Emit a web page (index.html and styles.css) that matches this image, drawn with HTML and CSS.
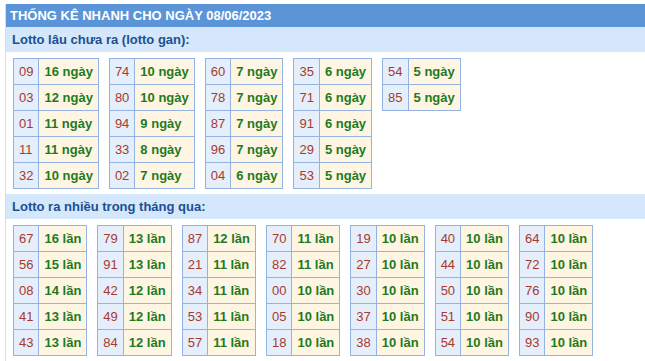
FILE: index.html
```html
<!DOCTYPE html>
<html lang="vi">
<head>
<meta charset="utf-8">
<title>Thống kê nhanh</title>
<link rel="stylesheet" href="styles.css">
</head>
<body>
<div class="box">
  <div class="title">THỐNG KÊ NHANH CHO NGÀY 08/06/2023</div>
  <div class="sub">Lotto lâu chưa ra (lotto gan):</div>
  <div class="group">
    <table class="t"><tr><td class="n">09</td><td class="v">16 ngày</td></tr><tr><td class="n">03</td><td class="v">12 ngày</td></tr><tr><td class="n">01</td><td class="v">11 ngày</td></tr><tr><td class="n">11</td><td class="v">11 ngày</td></tr><tr><td class="n">32</td><td class="v">10 ngày</td></tr></table>
    <table class="t"><tr><td class="n">74</td><td class="v">10 ngày</td></tr><tr><td class="n">80</td><td class="v">10 ngày</td></tr><tr><td class="n">94</td><td class="v">9 ngày</td></tr><tr><td class="n">33</td><td class="v">8 ngày</td></tr><tr><td class="n">02</td><td class="v">7 ngày</td></tr></table>
    <table class="t"><tr><td class="n">60</td><td class="v">7 ngày</td></tr><tr><td class="n">78</td><td class="v">7 ngày</td></tr><tr><td class="n">87</td><td class="v">7 ngày</td></tr><tr><td class="n">96</td><td class="v">7 ngày</td></tr><tr><td class="n">04</td><td class="v">6 ngày</td></tr></table>
    <table class="t"><tr><td class="n">35</td><td class="v">6 ngày</td></tr><tr><td class="n">71</td><td class="v">6 ngày</td></tr><tr><td class="n">91</td><td class="v">6 ngày</td></tr><tr><td class="n">29</td><td class="v">5 ngày</td></tr><tr><td class="n">53</td><td class="v">5 ngày</td></tr></table>
    <table class="t"><tr><td class="n">54</td><td class="v">5 ngày</td></tr><tr><td class="n">85</td><td class="v">5 ngày</td></tr></table>
  </div>
  <div class="sub">Lotto ra nhiều trong tháng qua:</div>
  <div class="group">
    <table class="t"><tr><td class="n">67</td><td class="v">16 lần</td></tr><tr><td class="n">56</td><td class="v">15 lần</td></tr><tr><td class="n">08</td><td class="v">14 lần</td></tr><tr><td class="n">41</td><td class="v">13 lần</td></tr><tr><td class="n">43</td><td class="v">13 lần</td></tr></table>
    <table class="t"><tr><td class="n">79</td><td class="v">13 lần</td></tr><tr><td class="n">91</td><td class="v">13 lần</td></tr><tr><td class="n">42</td><td class="v">12 lần</td></tr><tr><td class="n">49</td><td class="v">12 lần</td></tr><tr><td class="n">84</td><td class="v">12 lần</td></tr></table>
    <table class="t"><tr><td class="n">87</td><td class="v">12 lần</td></tr><tr><td class="n">21</td><td class="v">11 lần</td></tr><tr><td class="n">34</td><td class="v">11 lần</td></tr><tr><td class="n">53</td><td class="v">11 lần</td></tr><tr><td class="n">57</td><td class="v">11 lần</td></tr></table>
    <table class="t"><tr><td class="n">70</td><td class="v">11 lần</td></tr><tr><td class="n">82</td><td class="v">11 lần</td></tr><tr><td class="n">00</td><td class="v">10 lần</td></tr><tr><td class="n">05</td><td class="v">10 lần</td></tr><tr><td class="n">18</td><td class="v">10 lần</td></tr></table>
    <table class="t"><tr><td class="n">19</td><td class="v">10 lần</td></tr><tr><td class="n">27</td><td class="v">10 lần</td></tr><tr><td class="n">30</td><td class="v">10 lần</td></tr><tr><td class="n">37</td><td class="v">10 lần</td></tr><tr><td class="n">38</td><td class="v">10 lần</td></tr></table>
    <table class="t"><tr><td class="n">40</td><td class="v">10 lần</td></tr><tr><td class="n">44</td><td class="v">10 lần</td></tr><tr><td class="n">50</td><td class="v">10 lần</td></tr><tr><td class="n">51</td><td class="v">10 lần</td></tr><tr><td class="n">54</td><td class="v">10 lần</td></tr></table>
    <table class="t"><tr><td class="n">64</td><td class="v">10 lần</td></tr><tr><td class="n">72</td><td class="v">10 lần</td></tr><tr><td class="n">76</td><td class="v">10 lần</td></tr><tr><td class="n">90</td><td class="v">10 lần</td></tr><tr><td class="n">93</td><td class="v">10 lần</td></tr></table>
  </div>
</div>
</body>
</html>
```
FILE: styles.css
```css
html, body {
  margin: 0;
  padding: 0;
  background: #ffffff;
}
body {
  padding: 4px 0 0 5px;
  font-family: "Liberation Sans", Arial, sans-serif;
}
.box {
  width: 660px;
  border-left: 1px solid #dcdcdc;
  border-bottom: 1px solid #e4e4e4;
  padding-bottom: 2px;
}
.title {
  background: #5b95d7;
  color: #ffffff;
  font-weight: bold;
  font-size: 13px;
  line-height: 23px;
  height: 23px;
  padding-left: 4px;
}
.sub {
  background: #d5e7fa;
  color: #1d4f91;
  font-weight: bold;
  font-size: 13px;
  line-height: 25px;
  height: 25px;
  padding-left: 6px;
}
.group {
  display: flex;
  align-items: flex-start;
  gap: 10px;
  padding: 6px 7px 5px 7px;
}
.t {
  border-collapse: collapse;
  font-size: 13px;
  line-height: 15px;
}
.t td {
  border: 1px solid #94b3e2;
  padding: 5px 5px;
  white-space: nowrap;
}
.n {
  background: #e5eefb;
  color: #a73a2c;
}
.v {
  background: #fff5e3;
  color: #1f7a1f;
  font-weight: bold;
}
```
